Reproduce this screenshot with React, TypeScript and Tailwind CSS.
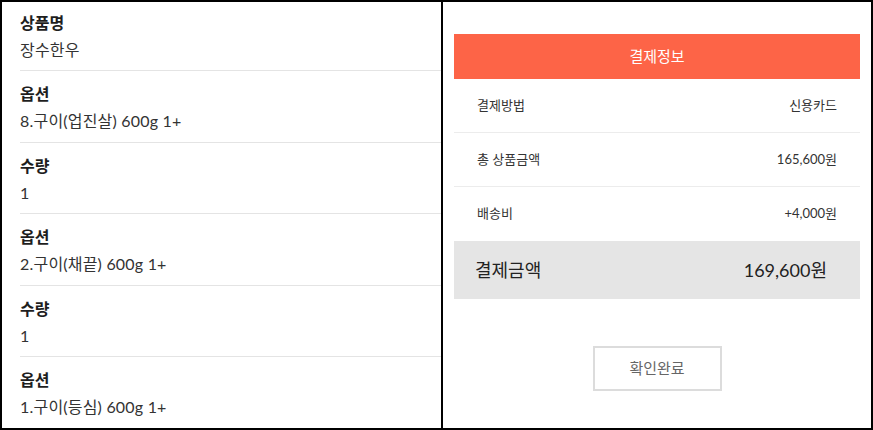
import React from 'react';

const font = { fontFamily: 'Lato, "Noto Sans CJK KR", sans-serif' };

const items = [
  { label: '상품명', value: '장수한우' },
  { label: '옵션', value: '8.구이(업진살) 600g 1+' },
  { label: '수량', value: '1' },
  { label: '옵션', value: '2.구이(채끝) 600g 1+' },
  { label: '수량', value: '1' },
  { label: '옵션', value: '1.구이(등심) 600g 1+' },
];

const payRows = [
  { label: '결제방법', value: '신용카드' },
  { label: '총 상품금액', value: '165,600원' },
  { label: '배송비', value: '+4,000원' },
];

export default function App() {
  return (
    <div
      className="w-[873px] h-[430px] bg-white border-2 border-black flex overflow-hidden text-[#2b2b2b]"
      style={font}
    >
      {/* Left: order detail */}
      <div className="w-[439px] shrink-0 pl-[18px] flex flex-col">
        {items.map((it, i) => (
          <div
            key={i}
            className={`flex flex-col shrink-0 ${i === 0 ? 'h-[69px] pt-[9px]' : 'h-[71.5px] pt-[11px]'} ${
              i < items.length - 1 ? 'border-b border-[#e4e4e4]' : ''
            }`}
          >
            <span className="text-[16px] leading-6 font-bold text-[#1e1e1e]">{it.label}</span>
            <span className="text-[16px] leading-6 mt-[3px] tracking-[0.2px] text-[#333]">{it.value}</span>
          </div>
        ))}
      </div>

      {/* Right: payment info */}
      <div className="flex-1 border-l-2 border-black px-[11px] pt-[32px] flex flex-col">
        <div className="h-[45px] bg-[#fd6447] flex items-center justify-center text-white text-[15px]">
          결제정보
        </div>
        {payRows.map((r, i) => (
          <div
            key={i}
            className={`h-[54px] px-[23px] flex items-center justify-between text-[13px] text-[#333] ${
              i < payRows.length - 1 ? 'border-b border-[#ececec]' : ''
            }`}
          >
            <span>{r.label}</span>
            <span>{r.value}</span>
          </div>
        ))}
        <div className="h-[58px] bg-[#e5e5e5] pl-[21px] pr-[33px] flex items-center justify-between text-[18px] text-[#222]">
          <span>결제금액</span>
          <span>169,600원</span>
        </div>
        <div className="flex justify-center mt-[47px]">
          <button className="w-[129px] h-[45px] border-2 border-[#dcdcdc] bg-white text-[15px] text-[#666]">
            확인완료
          </button>
        </div>
      </div>
    </div>
  );
}
